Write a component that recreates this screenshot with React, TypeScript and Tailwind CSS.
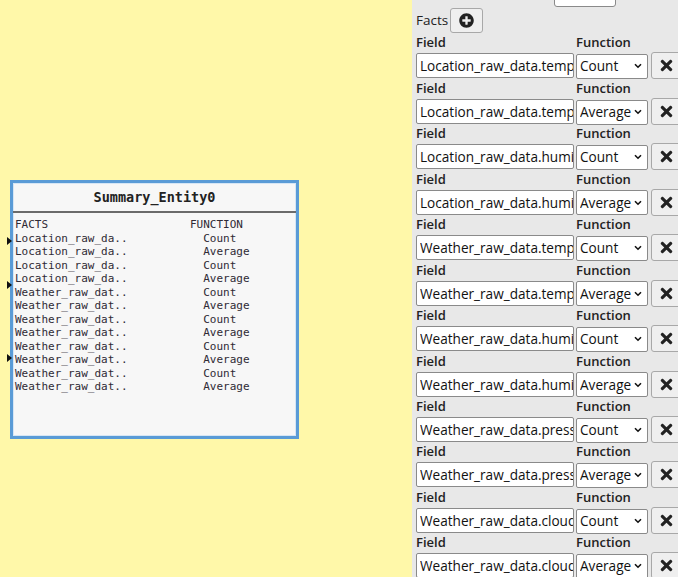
import React from "react";
import { FaPlusCircle, FaTimes } from "react-icons/fa";

type Fact = { field: string; fn: "Count" | "Average"; short: string };

const facts: Fact[] = [
  { field: "Location_raw_data.temperature", fn: "Count", short: "Location_raw_da.." },
  { field: "Location_raw_data.temperature", fn: "Average", short: "Location_raw_da.." },
  { field: "Location_raw_data.humidity", fn: "Count", short: "Location_raw_da.." },
  { field: "Location_raw_data.humidity", fn: "Average", short: "Location_raw_da.." },
  { field: "Weather_raw_data.temperature", fn: "Count", short: "Weather_raw_dat.." },
  { field: "Weather_raw_data.temperature", fn: "Average", short: "Weather_raw_dat.." },
  { field: "Weather_raw_data.humidity", fn: "Count", short: "Weather_raw_dat.." },
  { field: "Weather_raw_data.humidity", fn: "Average", short: "Weather_raw_dat.." },
  { field: "Weather_raw_data.pressure", fn: "Count", short: "Weather_raw_dat.." },
  { field: "Weather_raw_data.pressure", fn: "Average", short: "Weather_raw_dat.." },
  { field: "Weather_raw_data.cloudiness", fn: "Count", short: "Weather_raw_dat.." },
  { field: "Weather_raw_data.cloudiness", fn: "Average", short: "Weather_raw_dat.." },
];

const mono = { fontFamily: '"DejaVu Sans Mono", "Liberation Mono", monospace' };
const sans = { fontFamily: '"Open Sans", "Noto Sans", sans-serif' };

function Arrowhead({ top }: { top: number }) {
  return (
    <svg
      className="absolute left-[7px]"
      style={{ top }}
      width="5"
      height="8"
      viewBox="0 0 5 8"
    >
      <path d="M0 0 L5 4 L0 8 Z" fill="#111" />
    </svg>
  );
}

function EntityCard() {
  return (
    <div className="w-[289px] h-[259px] border-[3px] border-[#5a9bd6] bg-[#f7f7f7] shadow-[inset_0_0_0_1px_#d6e6f5] flex flex-col">
      <div
        className="h-[30px] flex items-center justify-center border-b-2 border-[#6b6b6b] text-[13.5px] font-bold text-[#222]"
        style={mono}
      >
        Summary_Entity0
      </div>
      <div
        className="pt-[5px] pl-[2px] text-[11px] leading-[13.5px] text-[#2f2a35] grid grid-cols-[175px_1fr]"
        style={mono}
      >
        <div>FACTS</div>
        <div>FUNCTION</div>
        {facts.map((f, i) => (
          <React.Fragment key={i}>
            <div>{f.short}</div>
            <div className="whitespace-pre">{"  " + f.fn}</div>
          </React.Fragment>
        ))}
      </div>
    </div>
  );
}

function FactRow({ f }: { f: Fact }) {
  return (
    <div>
      <div className="h-[20.45px] flex items-center text-[13px] font-semibold text-[#222]">
        <div className="w-[160px]">Field</div>
        <div>Function</div>
      </div>
      <div className="h-[25px] flex items-center">
        <input
          readOnly
          value={f.field}
          className="w-[158px] h-[25px] bg-white border border-[#8a8a8a] rounded-[2px] pl-[3px] text-[13.6px] text-[#111] outline-none"
          style={sans}
        />
        <div className="relative ml-[2px] w-[72px] h-[25px]">
          <select
            defaultValue={f.fn}
            className="appearance-none w-full h-full bg-white border border-[#8a8a8a] rounded-[2px] pl-[3px] text-[13.6px] text-[#111] outline-none"
            style={sans}
          >
            <option>Count</option>
            <option>Average</option>
            <option>Sum</option>
          </select>
          <svg
            className="absolute right-[6px] top-[10px] pointer-events-none"
            width="8"
            height="6"
            viewBox="0 0 8 6"
          >
            <path d="M1 1.2 L4 4.2 L7 1.2" fill="none" stroke="#111" strokeWidth="1.6" />
          </svg>
        </div>
        <button className="ml-[3px] w-[34px] h-[27px] shrink-0 bg-[#efefef] border border-[#a8a8a8] rounded-[3px] flex items-center justify-start pl-[6px]">
          <FaTimes className="w-[17px] h-[17px] text-[#222]" />
        </button>
      </div>
    </div>
  );
}

export default function App() {
  return (
    <div className="w-[678px] h-[577px] overflow-hidden flex" style={sans}>
      <div className="relative w-[412px] shrink-0 bg-[#fff8a9] pt-[180px] pl-[10px]">
        <EntityCard />
        <Arrowhead top={237} />
        <Arrowhead top={281} />
        <Arrowhead top={354} />
      </div>
      <div className="w-[290px] shrink-0 bg-[#e8e8e8] pl-[4px]">
        <div className="h-[7px] overflow-hidden flex items-end">
          <div className="ml-[138px] w-[62px] h-[26px] shrink-0 bg-white border border-[#8a8a8a] rounded-[3px]" />
        </div>
        <div className="h-[26px] flex items-center">
          <span className="text-[13.5px] text-[#222]">Facts</span>
          <button className="ml-[2px] w-[33px] h-[25px] bg-[#efefef] border border-[#a8a8a8] rounded-[3px] flex items-center justify-center">
            <FaPlusCircle className="w-[15px] h-[15px] text-[#222]" />
          </button>
        </div>
        {facts.map((f, i) => (
          <FactRow key={i} f={f} />
        ))}
      </div>
    </div>
  );
}
